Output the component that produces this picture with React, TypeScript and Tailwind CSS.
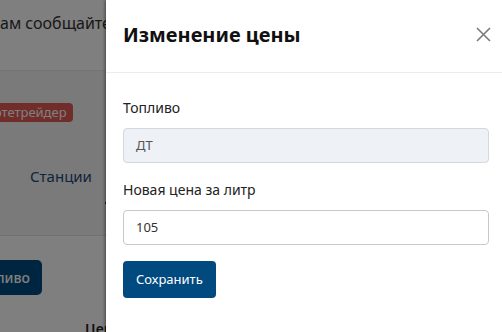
import React from "react";

export default function App() {
  return (
    <div
      className="relative w-[502px] h-[332px] overflow-hidden bg-white"
      style={{ fontFamily: '"Noto Sans", "Open Sans", sans-serif' }}
    >
      {/* Background page */}
      <div className="flex flex-col h-full">
        <div className="h-[70px] shrink-0 bg-white flex items-start pt-[11px]">
          <span className="-ml-[9px] text-[16px] text-[#333] whitespace-nowrap">
            вам сообщайте нам о проблемах
          </span>
        </div>
        <div className="h-[165px] shrink-0 bg-[#f4f4f4] border-t border-[#e6e6e6] flex flex-col">
          <div className="pt-[28px]">
            <span className="-ml-[34px] inline-block rounded-[4px] bg-[#e05a55] text-white text-[13px] pl-[6px] pr-[6px] leading-[19px]">
              Агротетрейдер
            </span>
          </div>
          <div className="pt-[42px] flex">
            <span className="ml-[30px] text-[15px] text-[#1e4a78]">Станции</span>
          </div>
          <div className="mt-[14px] ml-[105px] w-[3px] h-[2px] bg-[#1e4a78]" />
        </div>
        <div className="flex-1 min-h-0 bg-white border-t border-[#e2e2e2] flex flex-col">
          <div className="pt-[24px] shrink-0">
            <div className="-ml-[30px] w-[72px] h-[35px] rounded-[5px] bg-[#004a80] text-white text-[14px] font-medium flex items-center justify-end pr-[12px]">
              Топливо
            </div>
          </div>
          <div className="mt-[24px] shrink-0 ml-[85px] text-[14px] font-semibold text-[#222] leading-[20px]">Цена</div>
        </div>
      </div>

      {/* Overlay */}
      <div className="absolute inset-0 bg-black/50" />

      {/* Drawer */}
      <div className="absolute top-0 right-0 h-full w-[396px] bg-white shadow-[-1px_0_3px_rgba(0,0,0,0.45)] flex flex-col">
        <div className="h-[73px] flex items-center justify-between pl-[17px] pr-[7px] border-b border-[#ececec] shrink-0">
          <h2 className="text-[20px] font-bold text-[#111] leading-none -mt-[3px]">Изменение цены</h2>
          <button className="w-[24px] h-[24px] flex items-center justify-center -mt-[3px]">
            <svg width="15" height="15" viewBox="0 0 15 15" fill="none">
              <path d="M1 1 L14 14 M14 1 L1 14" stroke="#7a7a7a" strokeWidth="1.6" />
            </svg>
          </button>
        </div>
        <div className="pl-[17px] pr-[13px] pt-6 flex flex-col">
          <label className="text-[14px] leading-[21px] text-[#222] mb-2.5">Топливо</label>
          <div className="h-[35px] rounded-[4px] border border-[#d3d7de] bg-[#eef1f6] flex items-center px-[12px] text-[13px] text-[#555] mb-4">
            ДТ
          </div>
          <label className="text-[14px] leading-[21px] text-[#222] mb-2.5">Новая цена за литр</label>
          <div className="h-[35px] rounded-[4px] border border-[#c6c9ce] bg-white flex items-center px-[12px] text-[13px] text-[#333] mb-4">
            105
          </div>
          <div>
            <button className="h-[37px] px-[13px] rounded-[4px] bg-[#004a80] text-white text-[13px]">
              Сохранить
            </button>
          </div>
        </div>
      </div>
    </div>
  );
}
